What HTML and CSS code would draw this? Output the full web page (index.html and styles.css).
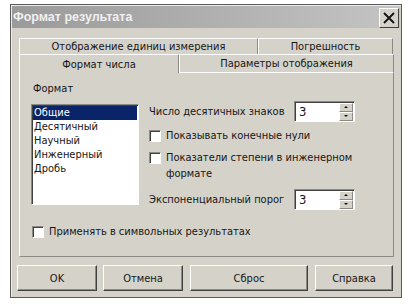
FILE: index.html
```html
<!DOCTYPE html>
<html lang="ru">
<head>
    <meta charset="UTF-8">
    <title>Формат результата</title>
    <link rel="stylesheet" href="styles.css">
</head>
<body>
    <div class="window">
        <div class="titlebar">
            <span class="title">Формат результата</span>
            <span class="close">
                <svg width="12" height="12" viewBox="0 0 12 12">
                    <path d="M1 1 L11 11 M11 1 L1 11" stroke="#111" stroke-width="1.8"/>
                </svg>
            </span>
        </div>

        <div class="content">
            <div class="tabs">
                <div class="tab-row back">
                    <div class="tab wide">Отображение единиц измерения</div>
                    <div class="tab">Погрешность</div>
                </div>
                <div class="tab-row front">
                    <div class="tab active">Формат числа</div>
                    <div class="tab">Параметры отображения</div>
                </div>
            </div>

            <div class="panel">
                <div class="label">Формат</div>
                <div class="main">
                    <ul class="listbox">
                        <li class="selected">Общие</li>
                        <li>Десятичный</li>
                        <li>Научный</li>
                        <li>Инженерный</li>
                        <li>Дробь</li>
                    </ul>
                    <div class="options">
                        <div class="spin-row">
                            <span>Число десятичных знаков</span>
                            <div class="spin">
                                <span class="value">3</span>
                                <div class="arrows">
                                    <span class="up"></span>
                                    <span class="down"></span>
                                </div>
                            </div>
                        </div>
                        <div class="check-row first">
                            <span class="box"></span>
                            <span>Показывать конечные нули</span>
                        </div>
                        <div class="check-row second">
                            <span class="box"></span>
                            <span>Показатели степени в инженерном<br>формате</span>
                        </div>
                        <div class="spin-row exp">
                            <span>Экспоненциальный порог</span>
                            <div class="spin">
                                <span class="value">3</span>
                                <div class="arrows">
                                    <span class="up"></span>
                                    <span class="down"></span>
                                </div>
                            </div>
                        </div>
                    </div>
                </div>
                <div class="check-row symbolic">
                    <span class="box"></span>
                    <span>Применять в символьных результатах</span>
                </div>
            </div>

            <div class="buttons">
                <button class="btn ok">OK</button>
                <button class="btn cancel">Отмена</button>
                <button class="btn reset">Сброс</button>
                <button class="btn help">Справка</button>
            </div>
        </div>
    </div>
</body>
</html>
```

FILE: styles.css
```css
:root {
    --face: #d5d2ca;
    --light: #ffffff;
    --shadow: #8c8a85;
    --dark: #404040;
    --text: #161616;
    --select: #0a246a;
    --ui-font: 'DejaVu Sans', Verdana, sans-serif;
}

body {
    margin: 0;
    background: #ffffff;
    font-family: var(--ui-font);
    font-stretch: condensed;
    font-size: 11px;
    color: var(--text);
}

.window {
    margin: 4px 0 0 10px;
    width: 390px;
    height: 292px;
    background: var(--face);
    border: 1px solid #5a5a5a;
    box-shadow: inset 1px 1px 0 #eeece6;
}

.titlebar {
    height: 22px;
    margin: 1px 1px 0 1px;
    display: flex;
    align-items: center;
    justify-content: space-between;
    background: linear-gradient(to right, #9a9a9a, #c4c4c4);
}

.title {
    color: #f0f0f0;
    font-family: 'Liberation Sans', Arial, sans-serif;
    font-stretch: normal;
    font-weight: bold;
    font-size: 12.5px;
    padding-left: 1px;
}

.close {
    width: 18px;
    height: 18px;
    margin: 1px 1px 0 0;
    display: flex;
    align-items: center;
    justify-content: center;
    background: var(--face);
    border: 1px solid;
    border-color: var(--light) var(--dark) var(--dark) var(--light);
}

.content {
    padding: 10px 7px 0 8px;
}

.tab-row {
    display: flex;
}

.tab-row.back {
    height: 16px;
    margin-right: 1px;
}

.tab-row.front {
    height: 19px;
}

.tab {
    flex: 1;
    display: flex;
    align-items: center;
    justify-content: center;
    white-space: nowrap;
    border-top: 1px solid var(--light);
    border-left: 1px solid var(--light);
    border-right: 1px solid var(--shadow);
    background: var(--face);
}

.tab.wide {
    flex: 0 0 237px;
}

.tab-row.front .tab:first-child {
    flex: 0 0 158px;
}

.tab-row.front .tab:not(.active) {
    border-bottom: 1px solid var(--light);
}

.panel {
    height: 175px;
    overflow: hidden;
    border-left: 1px solid var(--light);
    border-right: 1px solid var(--shadow);
    border-bottom: 1px solid var(--shadow);
    padding: 8px 0 0 11px;
}

.label {
    line-height: 15px;
    padding-left: 2px;
}

.main {
    display: flex;
    align-items: flex-start;
    margin-top: 1px;
}

.listbox {
    list-style: none;
    margin: 7px 0 0 0;
    padding: 1px 0 0 1px;
    width: 105px;
    height: 98px;
    background: #ffffff;
    border: 1px solid;
    border-color: var(--shadow) var(--light) var(--light) var(--shadow);
    box-shadow: inset 1px 1px 0 var(--dark);
}

.listbox li {
    line-height: 14px;
    padding-left: 1px;
    margin-right: 1px;
}

.listbox li.selected {
    background: var(--select);
    color: #ffffff;
}

.options {
    margin-left: 10px;
    width: 206px;
}

.spin-row {
    display: flex;
    align-items: center;
    justify-content: space-between;
    white-space: nowrap;
    margin-top: 4px;
}

.spin-row.exp {
    margin-top: 7px;
}

.spin {
    flex: 0 0 auto;
    width: 59px;
    height: 19px;
    display: flex;
    background: #ffffff;
    border: 1px solid;
    border-color: var(--shadow) var(--light) var(--light) var(--shadow);
    box-shadow: inset 1px 1px 0 var(--dark);
}

.spin .value {
    flex: 1;
    padding: 2px 0 0 4px;
    font-size: 13px;
}

.arrows {
    width: 14px;
    display: flex;
    flex-direction: column;
    margin: 1px 1px 0 0;
}

.arrows span {
    flex: 1;
    position: relative;
    background: var(--face);
    border: 1px solid;
    border-color: var(--light) var(--shadow) var(--shadow) var(--light);
}

.arrows span::after {
    content: "";
    position: absolute;
    left: 4px;
    top: 2px;
    border-left: 2px solid transparent;
    border-right: 2px solid transparent;
}

.arrows .up::after {
    border-bottom: 2px solid #111;
}

.arrows .down::after {
    border-top: 2px solid #111;
}

.check-row {
    display: flex;
    align-items: flex-start;
    line-height: 16px;
    white-space: nowrap;
}

.check-row.first {
    margin-top: 6px;
}

.check-row.second {
    margin-top: 6px;
}

.box {
    flex: 0 0 auto;
    width: 10px;
    height: 10px;
    margin: 2px 5px 0 0;
    background: #ffffff;
    border: 1px solid;
    border-color: var(--shadow) var(--light) var(--light) var(--shadow);
    box-shadow: inset 1px 1px 0 var(--dark);
}

.check-row.symbolic {
    margin-top: 14px;
    padding-left: 1px;
}

.buttons {
    display: flex;
    margin-top: 8px;
    margin-left: -2px;
}

.btn {
    height: 26px;
    padding: 0;
    background: var(--face);
    border: 1px solid;
    border-color: var(--light) var(--dark) var(--dark) var(--light);
    box-shadow: inset -1px -1px 0 var(--shadow);
    font-family: var(--ui-font);
    font-stretch: condensed;
    font-size: 11px;
    color: var(--text);
}

.ok {
    width: 80px;
}

.cancel {
    width: 80px;
    margin-left: 6px;
}

.reset {
    width: 118px;
    margin-left: 7px;
}

.help {
    width: 78px;
    margin-left: 7px;
}
```
